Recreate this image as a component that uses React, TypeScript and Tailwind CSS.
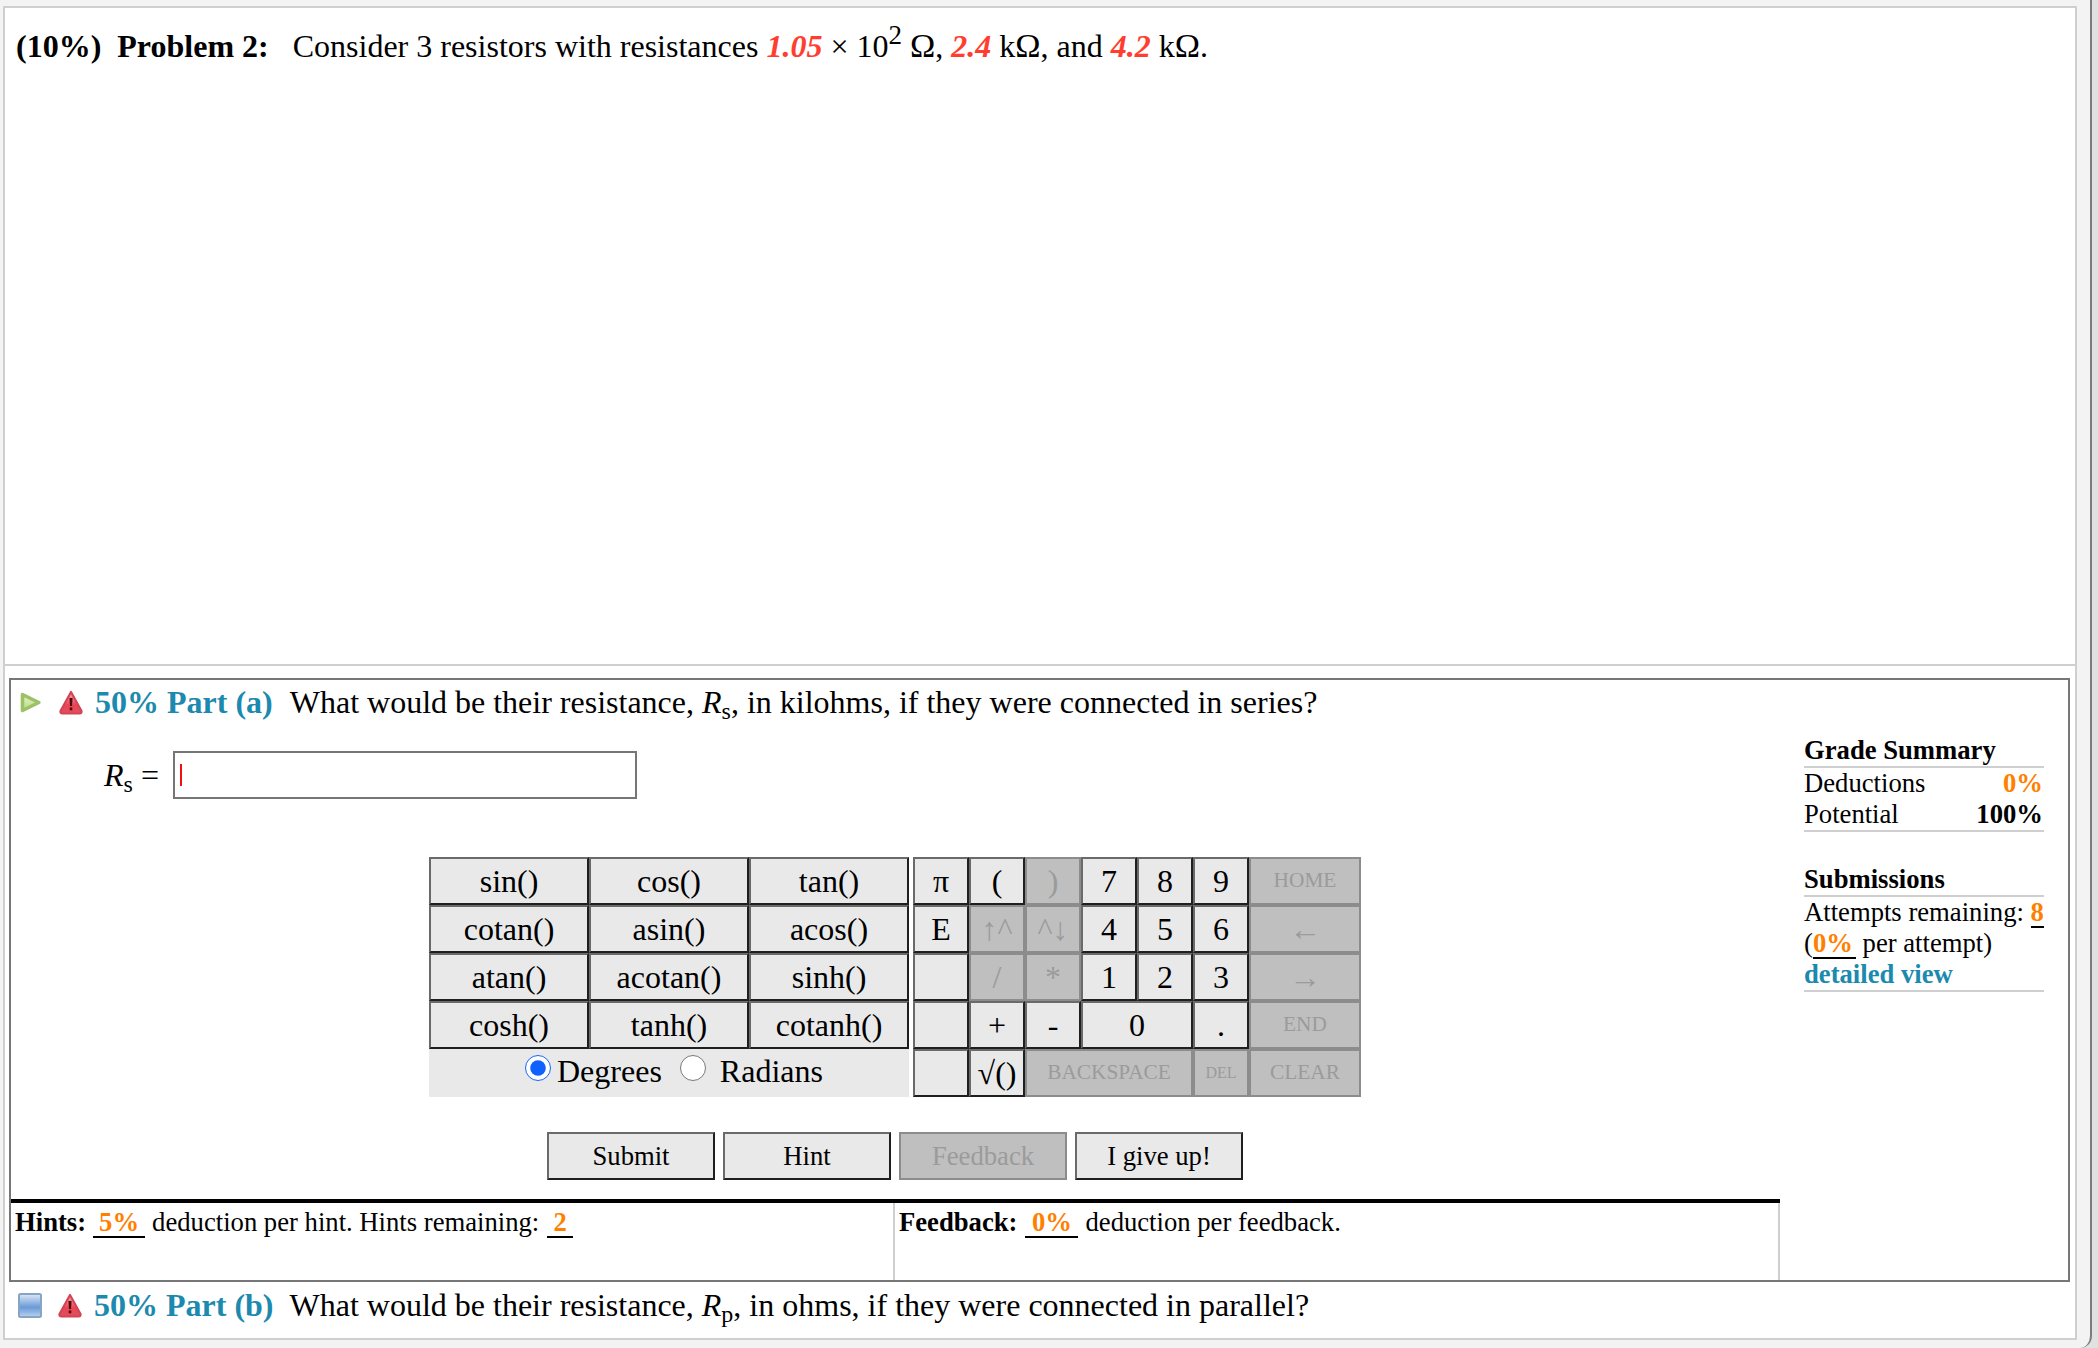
import React from "react";

const sideKeys = [
  "sin()", "cos()", "tan()",
  "cotan()", "asin()", "acos()",
  "atan()", "acotan()", "sinh()",
  "cosh()", "tanh()", "cotanh()",
];

type PadKey = { label: string; off?: boolean; span?: string; size?: string };

const padKeys: PadKey[] = [
  { label: "π" }, { label: "(" }, { label: ")", off: true },
  { label: "7" }, { label: "8" }, { label: "9" },
  { label: "HOME", off: true, span: "col-span-2", size: "text-[21.33px]" },
  { label: "E" }, { label: "↑^", off: true }, { label: "^↓", off: true },
  { label: "4" }, { label: "5" }, { label: "6" },
  { label: "←", off: true, span: "col-span-2" },
  { label: "" }, { label: "/", off: true }, { label: "*", off: true },
  { label: "1" }, { label: "2" }, { label: "3" },
  { label: "→", off: true, span: "col-span-2" },
  { label: "" }, { label: "+" }, { label: "-" },
  { label: "0", span: "col-span-2" }, { label: "." },
  { label: "END", off: true, span: "col-span-2", size: "text-[21.33px]" },
  { label: "" }, { label: "√()" },
  { label: "BACKSPACE", off: true, span: "col-span-3", size: "text-[21.33px]" },
  { label: "DEL", off: true, size: "text-[16px]" },
  { label: "CLEAR", off: true, span: "col-span-2", size: "text-[21.33px]" },
];

const Key = ({ label, off, span = "", size = "text-[32px]" }: PadKey) => (
  <button
    disabled={off}
    className={`${span} ${size} flex items-center justify-center whitespace-nowrap border-2 p-0 ${
      off
        ? "bg-[#bfbfbf] text-[#9b9b9b] border-[#8c8c8c]"
        : "bg-[#e9e9e9] text-black border-t-[#6a6a6a] border-l-[#6a6a6a] border-b-[#1f1f1f] border-r-[#1f1f1f]"
    }`}
  >
    {label}
  </button>
);

const ActionButton = ({ label, off }: { label: string; off?: boolean }) => (
  <button
    disabled={off}
    className={`w-[168px] h-[48px] border-2 text-[26.67px] ${
      off
        ? "bg-[#bfbfbf] text-[#9b9b9b] border-[#8c8c8c]"
        : "bg-[#e9e9e9] text-black border-t-[#6a6a6a] border-l-[#6a6a6a] border-b-[#1f1f1f] border-r-[#1f1f1f]"
    }`}
  >
    {label}
  </button>
);

const WarnIcon = () => (
  <svg width="24" height="25" viewBox="0 0 24 25" className="shrink-0 blur-[0.4px]">
    <defs>
      <linearGradient id="warnFill" x1="0" y1="0" x2="0" y2="1">
        <stop offset="0" stopColor="#f9b4b8" />
        <stop offset="0.6" stopColor="#ea4453" />
        <stop offset="1" stopColor="#e0505e" />
      </linearGradient>
    </defs>
    <path
      d="M12 2 L22.5 21 Q23 23.5 20.5 23.5 L3.5 23.5 Q1 23.5 1.5 21 Z"
      fill="url(#warnFill)"
      stroke="#d24555"
      strokeWidth="2.2"
      strokeLinejoin="round"
    />
    <path d="M10.4 8 L13.6 8 L13 16 L11 16 Z" fill="#4f0a12" />
    <rect x="10.7" y="17.5" width="2.6" height="2.8" fill="#4f0a12" />
  </svg>
);

const PlayIcon = () => (
  <svg width="21" height="21" viewBox="0 0 21 21" className="shrink-0 blur-[0.4px]">
    <defs>
      <linearGradient id="playFill" x1="0" y1="0" x2="0" y2="1">
        <stop offset="0" stopColor="#e4f0cc" />
        <stop offset="1" stopColor="#bcdc84" />
      </linearGradient>
    </defs>
    <path
      d="M2.5 2.5 L18.8 10.5 L2.5 18.5 Z"
      fill="url(#playFill)"
      stroke="#9cc266"
      strokeWidth="3.6"
      strokeLinejoin="round"
    />
  </svg>
);

const CollapsedIcon = () => (
  <svg width="24" height="25" viewBox="0 0 24 25" className="shrink-0 blur-[0.4px]">
    <defs>
      <linearGradient id="boxFill" x1="0" y1="0" x2="0" y2="1">
        <stop offset="0" stopColor="#dfe9f6" />
        <stop offset="0.58" stopColor="#6a9ad8" />
        <stop offset="1" stopColor="#bcd3ee" />
      </linearGradient>
    </defs>
    <rect x="1" y="1" width="22" height="23" rx="1.5" fill="url(#boxFill)" stroke="#86a4c4" strokeWidth="2" />
  </svg>
);

const Orange = ({ children }: { children: React.ReactNode }) => (
  <b className="text-[#ff8000]">{children}</b>
);

const Blank = ({ children, className }: { children: React.ReactNode; className: string }) => (
  <span className={`inline-block text-center border-b-2 border-black leading-[28px] ${className}`}>
    {children}
  </span>
);

const Omega = () => <span className="text-[34px]">Ω</span>;

export default function App() {
  return (
    <div className="w-[2098px] h-[1348px] overflow-hidden bg-[#e0e1e3] text-black font-['Liberation_Serif','Times_New_Roman',serif]">
      <div className="w-[2092px] h-[1348px] bg-[#f3f3f3] border-r-2 border-[#7d7d7d] rounded-br-[12px] pt-[6px] pl-[3px]">
        <div className="w-[2074px] h-[1334px] bg-white border-2 border-[#cfcfcf]">
          {/* problem statement */}
          <div className="h-[656px] pl-[11px] pt-[19px] text-[32px] leading-[37px] whitespace-pre">
            <b>(10%)</b>
            {"  "}
            <b>Problem 2:</b>
            {"   Consider 3 resistors with resistances "}
            <b className="italic text-[#ff3e30]">1.05</b>
            {" × 10"}
            <sup className="text-[27px]">2</sup>
            {" "}
            <Omega />
            {", "}
            <b className="italic text-[#ff3e30]">2.4</b>
            {" k"}
            <Omega />
            {", and "}
            <b className="italic text-[#ff3e30]">4.2</b>
            {" k"}
            <Omega />
            {"."}
          </div>

          <div className="h-[2px] bg-[#cfcfcf]" />

          {/* part a */}
          <div className="mt-[12px] ml-[4px] w-[2061px] h-[604px] border-2 border-[#777777] flex">
            <div className="w-[1769px]">
              <div className="h-[44px] flex items-center pl-[9px] text-[32px] whitespace-nowrap">
                <PlayIcon />
                <span className="ml-[18px]">
                  <WarnIcon />
                </span>
                <b className="ml-[12px] text-[#1b8aae]">50% Part (a)</b>
                <span className="ml-[17px]">
                  What would be their resistance, <i>R</i>
                  <sub>s</sub>, in kilohms, if they were connected in series?
                </span>
              </div>

              <div className="mt-[27px] pl-[93px] flex items-center text-[32px]">
                <span className="w-[58px] whitespace-nowrap">
                  <i>R</i>
                  <sub>s</sub> =
                </span>
                <div className="ml-[11px] w-[464px] h-[48px] border-2 border-[#767676] bg-white flex items-center pl-[5px]">
                  <div className="w-[2px] h-[22px] bg-[#f01010]" />
                </div>
              </div>

              <div className="mt-[58px] pl-[418px] flex gap-[4px]">
                <div className="w-[480px]">
                  <div className="grid grid-cols-3 auto-rows-[48px]">
                    {sideKeys.map((k) => (
                      <Key key={k} label={k} />
                    ))}
                  </div>
                  <div className="h-[48px] bg-[#e9e9e9] flex items-center text-[32px] pl-[96px] pb-[4px]">
                    <input type="radio" name="unit" defaultChecked className="w-[26px] h-[26px] m-0 mb-[6px] accent-[#0f62fe]" />
                    <span className="ml-[6px]">Degrees</span>
                    <input type="radio" name="unit" className="ml-[18px] w-[26px] h-[26px] mt-0 mr-0 mb-[6px]" />
                    <span className="ml-[14px]">Radians</span>
                  </div>
                </div>
                <div className="grid grid-cols-[repeat(8,56px)] auto-rows-[48px]">
                  {padKeys.map((k, i) => (
                    <Key key={i} {...k} />
                  ))}
                </div>
              </div>

              <div className="mt-[35px] pl-[536px] flex gap-[8px]">
                <ActionButton label="Submit" />
                <ActionButton label="Hint" />
                <ActionButton label="Feedback" off />
                <ActionButton label="I give up!" />
              </div>

              <div className="mt-[19px] h-[81px] border-t-4 border-black flex text-[26.67px] leading-[31px] whitespace-nowrap">
                <div className="w-[884px] border-r-2 border-[#cfcfcf] pl-[4px] pt-[4px]">
                  <b>Hints:</b>
                  <Blank className="w-[52px] ml-[7px]">
                    <Orange>5%</Orange>
                  </Blank>
                  <span className="ml-[7px]">deduction per hint. Hints remaining:</span>
                  <Blank className="w-[26px] ml-[8px]">
                    <Orange>2</Orange>
                  </Blank>
                </div>
                <div className="w-[885px] border-r-2 border-[#cfcfcf] pl-[4px] pt-[4px]">
                  <b>Feedback:</b>
                  <Blank className="w-[53px] ml-[8px]">
                    <Orange>0%</Orange>
                  </Blank>
                  <span className="ml-[7px]">deduction per feedback.</span>
                </div>
              </div>
            </div>

            {/* grade summary */}
            <div className="ml-[24px] w-[240px] pt-[55px] text-[26.67px] leading-[31px]">
              <div className="border-b-2 border-[#cfcfcf]">
                <b>Grade Summary</b>
              </div>
              <div className="flex justify-between pr-[1px]">
                <span>Deductions</span>
                <Orange>0%</Orange>
              </div>
              <div className="flex justify-between pr-[1px] border-b-2 border-[#cfcfcf]">
                <span>Potential</span>
                <b>100%</b>
              </div>
              <div className="mt-[32px] border-b-2 border-[#cfcfcf]">
                <b>Submissions</b>
              </div>
              <div className="whitespace-nowrap">
                Attempts remaining:{" "}
                <span className="inline-block border-b-2 border-black leading-[28px]">
                  <Orange>8</Orange>
                </span>
              </div>
              <div className="whitespace-nowrap">
                (
                <span className="inline-block border-b-2 border-black leading-[28px] pr-[3px]">
                  <Orange>0%</Orange>
                </span>{" "}
                per attempt)
              </div>
              <div className="border-b-2 border-[#cfcfcf]">
                <b className="text-[#1b8aae]">detailed view</b>
              </div>
            </div>
          </div>

          {/* part b */}
          <div className="h-[46px] flex items-center pl-[13px] text-[32px] whitespace-nowrap">
            <CollapsedIcon />
            <span className="ml-[16px]">
              <WarnIcon />
            </span>
            <b className="ml-[12px] text-[#1b8aae]">50% Part (b)</b>
            <span className="ml-[16px]">
              What would be their resistance, <i>R</i>
              <sub>p</sub>, in ohms, if they were connected in parallel?
            </span>
          </div>
        </div>
      </div>
    </div>
  );
}
